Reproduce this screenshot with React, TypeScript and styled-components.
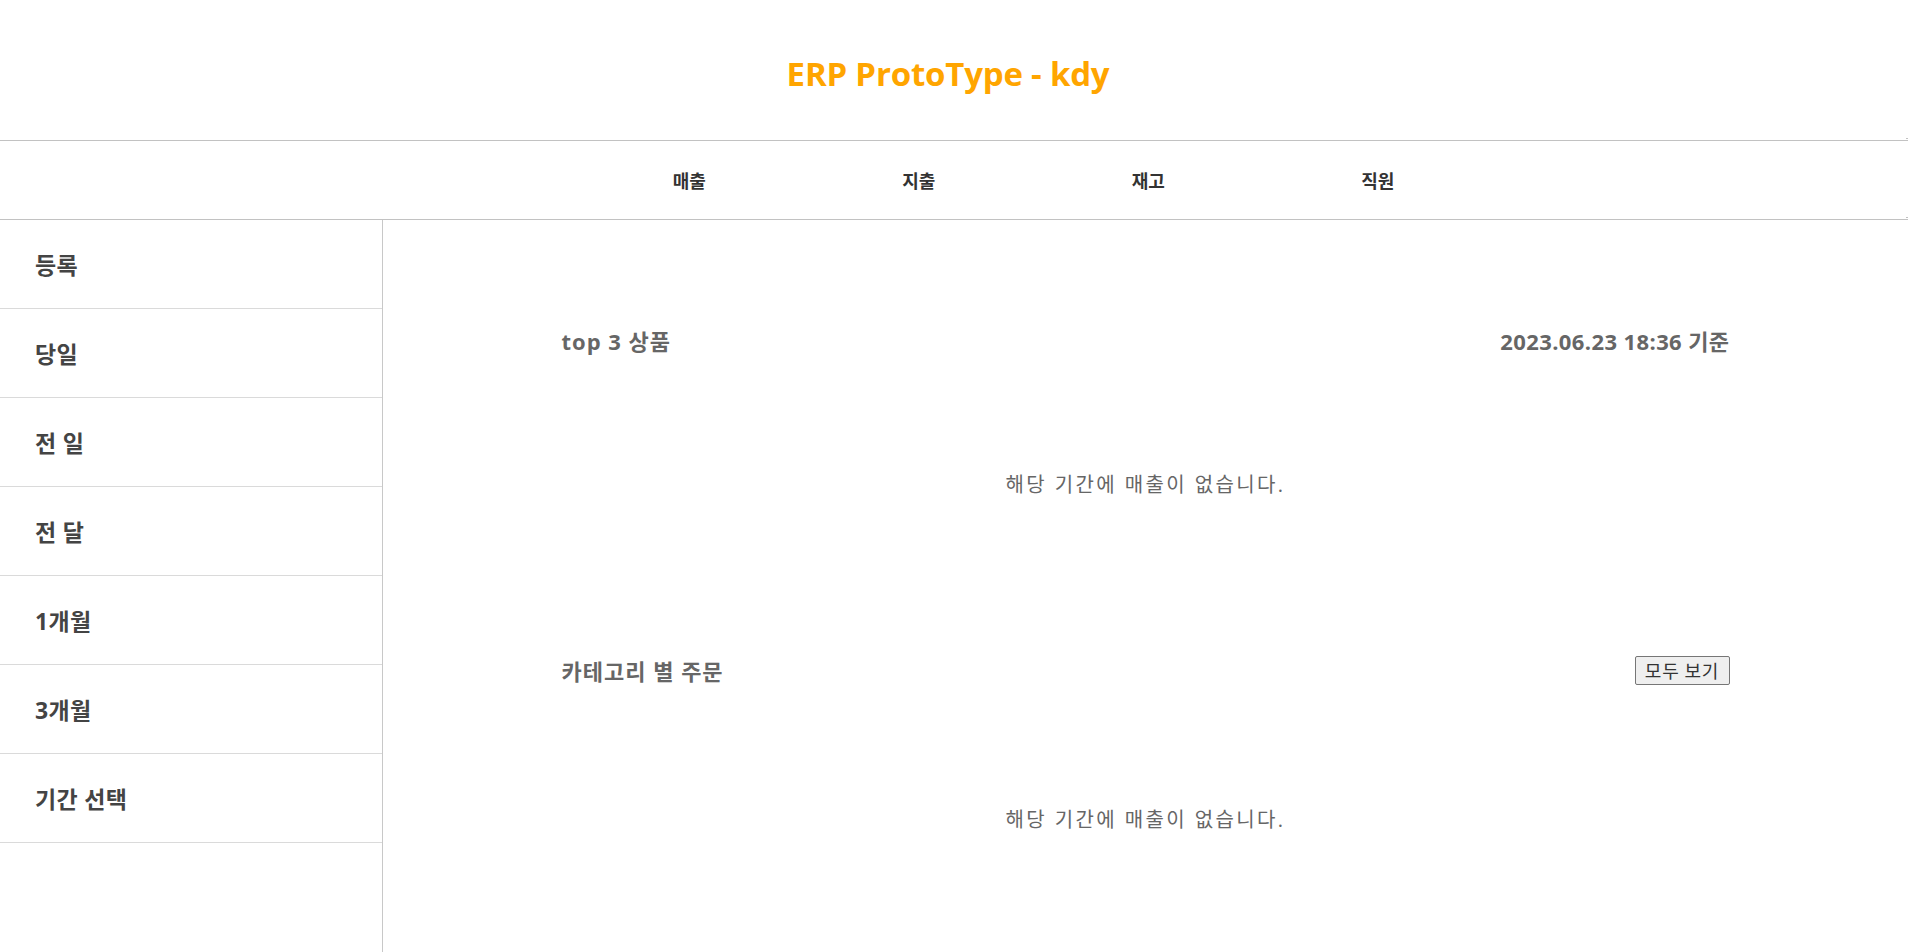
import React from "react";
import styled, { createGlobalStyle } from "styled-components";

const GlobalStyle = createGlobalStyle`
  html, body { margin: 0; padding: 0; background: #fff; }
  body { font-family: "Open Sans", "Noto Sans CJK KR", sans-serif; }
  * { box-sizing: border-box; }
`;

const Page = styled.div`
  display: flex;
  flex-direction: column;
  height: 952px;
  overflow: hidden;
`;

const Header = styled.header`
  height: 141px;
  display: flex;
  align-items: center;
  justify-content: center;
  border-bottom: 1px solid #c2c2c2;
  position: relative;
  &::after {
    content: "";
    position: absolute;
    right: 0;
    bottom: 1px;
    width: 2px;
    height: 1px;
    background: #c2c2c2;
  }
`;

const Title = styled.h1`
  margin: 6px 0 0 -12px;
  font-size: 33px;
  font-weight: 700;
  color: #ffa500;
  letter-spacing: -0.2px;
`;

const Nav = styled.nav`
  height: 79px;
  display: flex;
  align-items: center;
  justify-content: center;
  padding-left: 159px;
  border-bottom: 1px solid #c2c2c2;
  position: relative;
  &::after {
    content: "";
    position: absolute;
    right: 0;
    bottom: 1px;
    width: 2px;
    height: 1px;
    background: #c2c2c2;
  }
`;

const NavItem = styled.a`
  width: 229.5px;
  text-align: center;
  font-size: 18px;
  font-weight: 700;
  color: #333;
  text-decoration: none;
  margin-top: 0;
`;

const Body = styled.div`
  flex: 1;
  display: flex;
`;

const Sidebar = styled.aside`
  width: 383px;
  flex-shrink: 0;
  border-right: 1px solid #c8c8c8;
  display: flex;
  flex-direction: column;
`;

const SideItem = styled.div`
  height: 89px;
  border-bottom: 1px solid #dadada;
  display: flex;
  align-items: center;
  padding-left: 35px;
  font-size: 23px;
  font-weight: 700;
  letter-spacing: 0.3px;
  color: #444;
`;

const Content = styled.main`
  flex: 1;
  display: flex;
  justify-content: center;
`;

const Inner = styled.div`
  width: 1168px;
  display: flex;
  flex-direction: column;
`;

const Section = styled.section<{ $top: number }>`
  margin-top: ${(p) => p.$top}px;
  display: flex;
  flex-direction: column;
`;

const SectionHead = styled.div`
  height: 32px;
  display: flex;
  align-items: center;
  justify-content: space-between;
`;

const SectionTitle = styled.h3`
  margin: 0;
  font-size: 22px;
  font-weight: 700;
  letter-spacing: 1px;
  color: #666;
`;

const Stamp = styled.span`
  font-size: 22px;
  font-weight: 700;
  letter-spacing: 0.4px;
  color: #666;
`;

const Empty = styled.p<{ $gap: number }>`
  margin: ${(p) => p.$gap}px 0 0;
  text-align: center;
  font-size: 20px;
  letter-spacing: 2.4px;
  color: #666;
  line-height: 28px;
`;

const ViewAll = styled.button`
  width: 95px;
  height: 29px;
  padding: 0;
  font-family: "Noto Sans CJK KR", sans-serif;
  font-size: 18px;
  letter-spacing: 0.8px;
  line-height: 1;
  color: #333;
  background: #efefef;
  border: 1px solid #767676;
  border-radius: 2px;
`;

const navs = ["매출", "지출", "재고", "직원"];
const sides = ["등록", "당일", "전 일", "전 달", "1개월", "3개월", "기간 선택"];

export default function App() {
  return (
    <>
      <GlobalStyle />
      <Page>
        <Header>
          <Title>ERP ProtoType - kdy</Title>
        </Header>
        <Nav>
          {navs.map((n) => (
            <NavItem key={n}>{n}</NavItem>
          ))}
        </Nav>
        <Body>
          <Sidebar>
            {sides.map((s) => (
              <SideItem key={s}>{s}</SideItem>
            ))}
          </Sidebar>
          <Content>
            <Inner>
              <Section $top={104}>
                <SectionHead>
                  <SectionTitle>top 3 상품</SectionTitle>
                  <Stamp>2023.06.23 18:36 기준</Stamp>
                </SectionHead>
                <Empty $gap={115}>해당 기간에 매출이 없습니다.</Empty>
              </Section>
              <Section $top={155}>
                <SectionHead>
                  <SectionTitle>카테고리 별 주문</SectionTitle>
                  <ViewAll>모두 보기</ViewAll>
                </SectionHead>
                <Empty $gap={120}>해당 기간에 매출이 없습니다.</Empty>
              </Section>
            </Inner>
          </Content>
        </Body>
      </Page>
    </>
  );
}
